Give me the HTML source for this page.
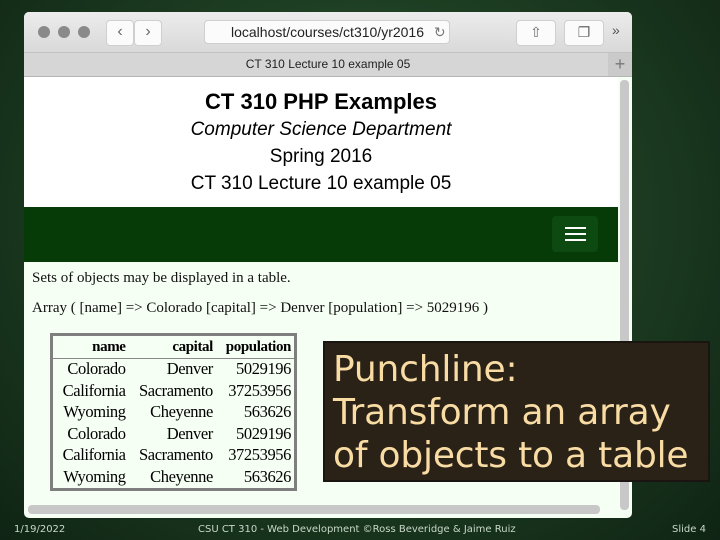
<!DOCTYPE html>
<html><head><style>
body{margin:0;width:720px;height:540px;overflow:hidden;position:relative;
background:radial-gradient(ellipse at 50% 40%,#2e5a32 0%,#1d3d22 50%,#0f2414 100%);font-family:"Liberation Sans",sans-serif}
.win{position:absolute;left:24px;top:12px;width:608px;height:506px;background:#f6fff4;border-radius:5px;overflow:hidden}
.tb{position:absolute;left:0;top:0;width:608px;height:40px;background:linear-gradient(#ececec,#d9d9d9);border-bottom:1px solid #c2c2c2}
.dot{position:absolute;top:14px;width:12px;height:12px;border-radius:50%;background:#8a8a8a}
.btn{position:absolute;top:8px;height:24px;background:#fbfbfb;border:1px solid #cfcfcf;border-radius:4px;color:#666;font-size:16px;text-align:center;line-height:22px}
.tab{position:absolute;left:0;top:41px;width:608px;height:23px;background:#d6d6d6;border-bottom:1px solid #b5b5b5;font-size:12px;text-align:center;line-height:23px;color:#222}
.head{position:absolute;left:0;top:65px;width:594px;height:130px;background:#fff;text-align:center;color:#000}
.head div{position:absolute;left:0;width:594px;line-height:24px}
.nav{position:absolute;left:0;top:195px;width:594px;height:55px;background:#063a06}
.ham{position:absolute;left:528px;top:9px;width:46px;height:36px;background:#0c4a12;border-radius:4px}
.ham i{position:absolute;left:13px;width:21px;height:2px;background:#fff}
.content{position:absolute;left:8px;top:258px;font-family:"Liberation Serif",serif;font-size:15px;color:#111}
table{position:absolute;left:26px;top:321px;width:247px;border:3px solid #7f7f7f;border-collapse:collapse;font-family:"Liberation Serif",serif;font-size:16.5px;background:#f6fff4;letter-spacing:-0.4px}
td,th{text-align:right;padding:0 3px 0 4px;height:21.5px;line-height:20px}
th{border-bottom:1px solid #888;font-weight:bold;font-size:15px}
.vs{position:absolute;left:596px;top:68px;width:9px;height:430px;background:#c8c8c8;border-radius:4px}
.hs{position:absolute;left:4px;top:493px;width:572px;height:9px;background:#c8c8c8;border-radius:4px}
.punch{position:absolute;left:323px;top:341px;width:387px;height:141px;background:#2a2117;border:2px solid #1a1510;color:#f8dca4;font-family:"DejaVu Sans",sans-serif;font-size:36px;line-height:43px;padding:5px 0 0 8px;box-sizing:border-box;letter-spacing:-0.2px;white-space:nowrap}
.foot{position:absolute;top:524px;font-family:"DejaVu Sans",sans-serif;font-size:10px;color:#c8d8c8}
</style></head><body>
<div class="win">
<div class="tb">
<div class="dot" style="left:14px"></div><div class="dot" style="left:34px"></div><div class="dot" style="left:54px"></div>
<div class="btn" style="left:82px;width:26px">‹</div><div class="btn" style="left:110px;width:26px">›</div>
<div class="btn" style="left:180px;width:246px;font-size:14px;color:#222;text-align:left;padding-left:26px;box-sizing:border-box">localhost/courses/ct310/yr2016 <span style="color:#777;margin-left:6px">↻</span></div>
<div class="btn" style="left:492px;width:38px;font-size:14px">⇧</div>
<div class="btn" style="left:540px;width:38px;font-size:14px">❐</div>
<div style="position:absolute;left:588px;top:10px;font-size:14px;color:#555">»</div>
</div>
<div class="tab">CT 310 Lecture 10 example 05<span style="position:absolute;right:0;top:0;width:24px;font-size:18px;color:#777;background:#cacaca">+</span></div>
<div class="head">
<div style="top:13px;font-size:22px;font-weight:bold">CT 310 PHP Examples</div>
<div style="top:41px;font-size:19px;font-style:italic">Computer Science Department</div>
<div style="top:68px;font-size:19px">Spring 2016</div>
<div style="top:95px;font-size:19px">CT 310 Lecture 10 example 05</div>
</div>
<div class="nav"><div class="ham"><i style="top:11px"></i><i style="top:17px"></i><i style="top:23px"></i></div></div>
<div class="content">Sets of objects may be displayed in a table.<br><div style="margin-top:13px">Array ( [name] =&gt; Colorado [capital] =&gt; Denver [population] =&gt; 5029196 )</div></div>
<table>
<tr><th>name</th><th>capital</th><th>population</th></tr>
<tr><td>Colorado</td><td>Denver</td><td>5029196</td></tr>
<tr><td>California</td><td>Sacramento</td><td>37253956</td></tr>
<tr><td>Wyoming</td><td>Cheyenne</td><td>563626</td></tr>
<tr><td>Colorado</td><td>Denver</td><td>5029196</td></tr>
<tr><td>California</td><td>Sacramento</td><td>37253956</td></tr>
<tr><td>Wyoming</td><td>Cheyenne</td><td>563626</td></tr>
</table>
<div class="vs"></div><div class="hs"></div>
</div>
<div class="punch">Punchline:<br>Transform an array<br>of objects to a table</div>
<div class="foot" style="left:14px">1/19/2022</div>
<div class="foot" style="left:198px">CSU CT 310 - Web Development ©Ross Beveridge &amp; Jaime Ruiz</div>
<div class="foot" style="left:672px">Slide 4</div>
</body></html>
